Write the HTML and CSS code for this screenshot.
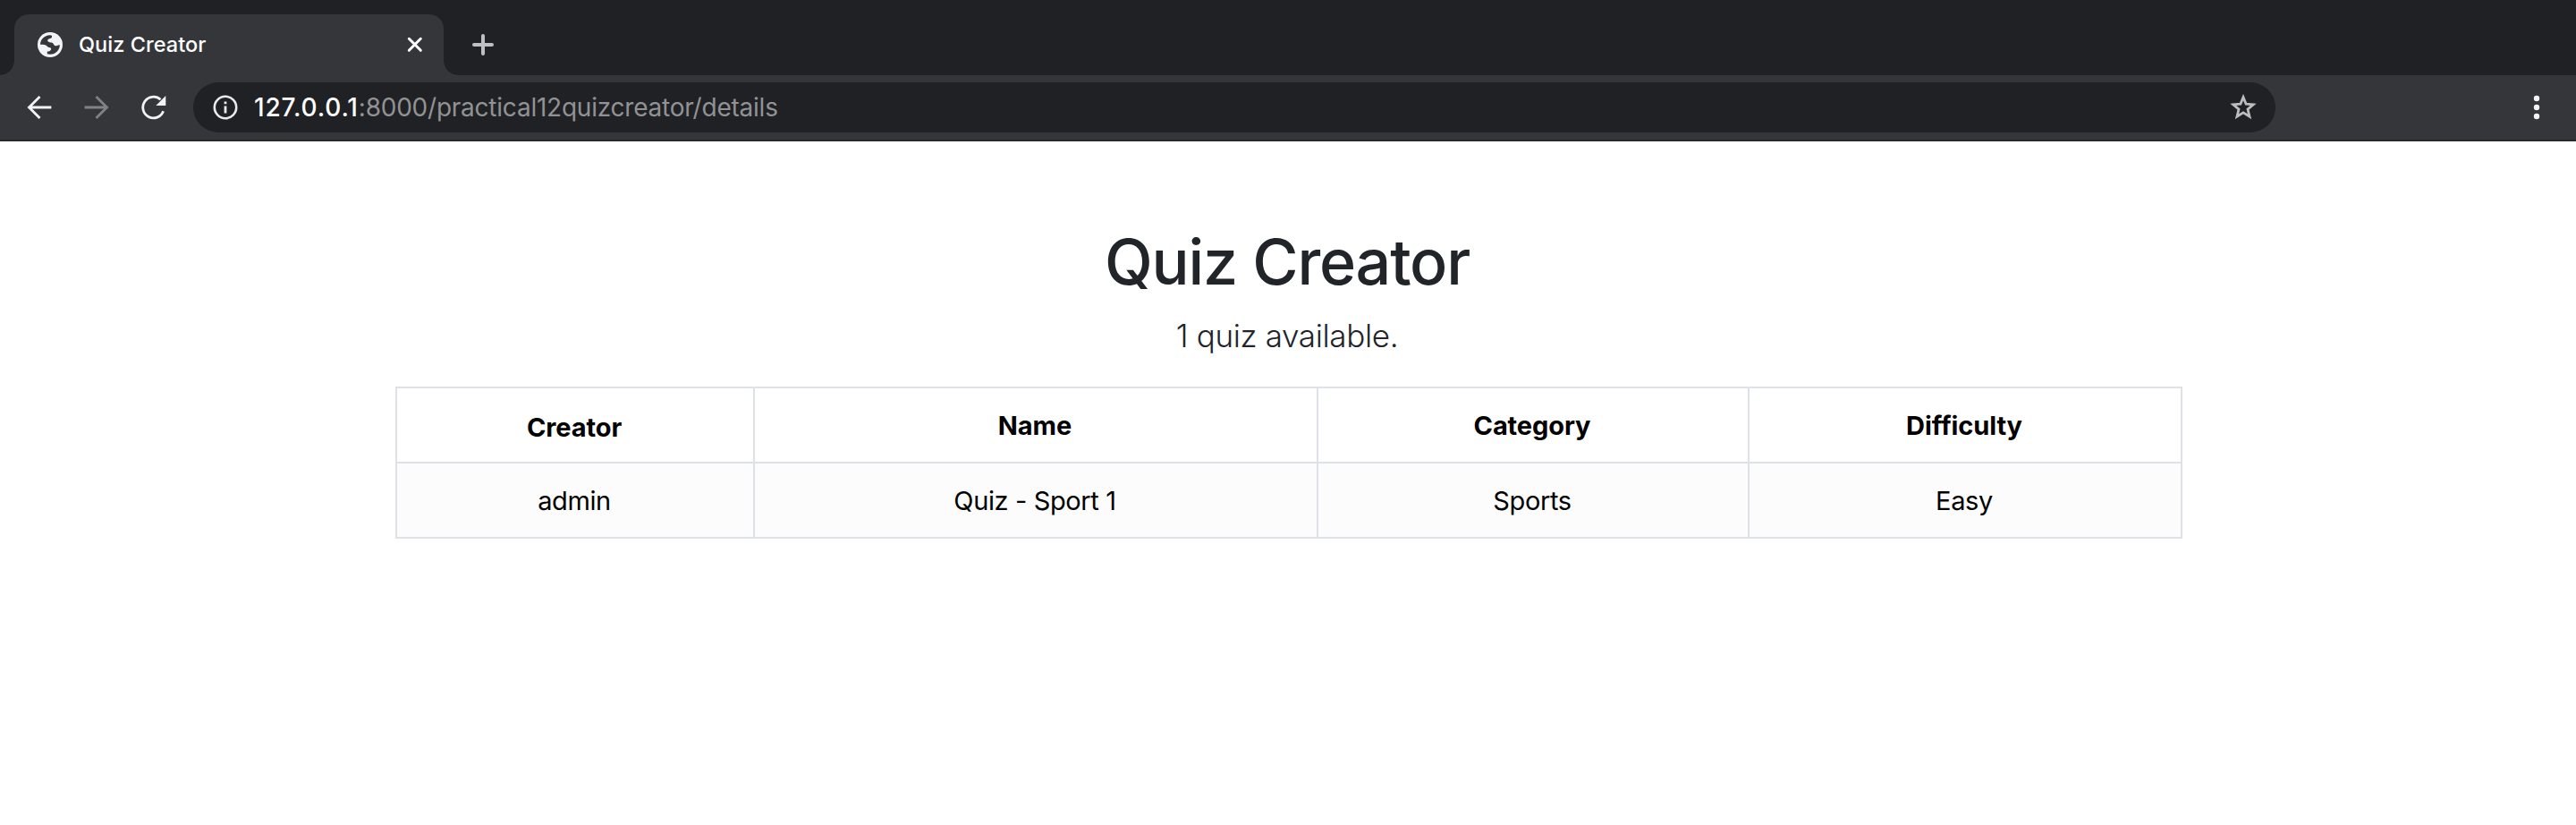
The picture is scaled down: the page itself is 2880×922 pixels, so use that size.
FILE: index.html
```
<!DOCTYPE html>
<html lang="en">
<head>
<meta charset="utf-8">
<title>Quiz Creator</title>
<link rel="stylesheet" href="styles.css">
</head>
<body>
<header class="browser">
  <div class="tabstrip">
    <div class="tab">
      <svg class="favicon" width="28" height="28" viewBox="42 36 28 28"><circle cx="56" cy="50" r="14" fill="#f1f3f4"/><path fill="#35363a" d="M45 49.7C45.2 44 49.5 39.4 56 39.2L58 39.8V41.8C57 43.6 53.3 42.9 53.3 45.5C53.3 47.5 57.8 47.2 58.8 48C60.4 49.4 60 51.3 63 51.3L66.8 50C67 55.5 62.5 60.8 56 60.8L52.8 60.2V57.6C55.5 57.6 57.2 56.6 57.2 54C55.8 52.6 53.8 53.3 52.5 51.5C51 49.4 48.5 49.8 45 49.7Z"/></svg>
      <span class="tab-title">Quiz Creator</span>
      <svg class="close" width="18" height="18" viewBox="0 0 18 18"><path d="M2.3 2.3 15.3 15.3M15.3 2.3 2.3 15.3" stroke="#fff" stroke-width="3" stroke-linecap="round"/></svg>
    </div>
    <svg class="new-tab" width="24" height="24" viewBox="0 0 24 24"><path d="M12 2V22M2 12H22" stroke="#bdc1c6" stroke-width="4" stroke-linecap="round"/></svg>
  </div>
  <div class="toolbar">
    <svg class="back" width="28" height="28" viewBox="0 0 28 28"><path d="M26 14H3M13.5 3 2.5 14 13.5 25" fill="none" stroke="#f1f3f4" stroke-width="2.8" stroke-linecap="square"/></svg>
    <svg class="forward" width="28" height="28" viewBox="0 0 28 28"><path d="M2 14H25M14.5 3 25.5 14 14.5 25" fill="none" stroke="#818285" stroke-width="2.8" stroke-linecap="square"/></svg>
    <svg class="reload" width="28" height="28" viewBox="0 0 28 28"><path d="M21.5 5.3A11.8 11.8 0 1 0 24.6 18.2" fill="none" stroke="#f1f3f4" stroke-width="2.8"/><path d="M27.3 1V12H16.3Z" fill="#f1f3f4"/></svg>
    <div class="omnibox">
      <svg class="info" width="28" height="28" viewBox="0 0 28 28"><circle cx="14" cy="14" r="12.2" fill="none" stroke="#e8eaed" stroke-width="2.6"/><path d="M12.6 7.5h2.8v2.8h-2.8zM12.6 12.6h2.8v7.9h-2.8z" fill="#e8eaed"/></svg>
      <span class="url"><b>127.0.0.1</b>:8000/practical12quizcreator/details</span>
      <svg class="star" width="30" height="30" viewBox="0 0 30 30"><path d="M15 3.6 18.1 11.2 26.2 11.8 20 17.1 22 25.2 15 20.9 8 25.2 10 17.1 3.8 11.8 11.9 11.2Z" fill="none" stroke="#bdbdbe" stroke-width="2.8"/></svg>
    </div>
    <svg class="menu" width="8" height="28" viewBox="0 0 8 28"><g fill="#f1f3f4"><circle cx="4" cy="4" r="3.2"/><circle cx="4" cy="14" r="3.2"/><circle cx="4" cy="24" r="3.2"/></g></svg>
  </div>
</header>
<main class="page">
  <h1 class="title">Quiz Creator</h1>
  <p class="lead">1 quiz available.</p>
  <table class="quizzes">
    <colgroup><col class="c1"><col class="c2"><col class="c3"><col class="c4"></colgroup>
    <thead><tr><th class="creator">Creator</th><th>Name</th><th>Category</th><th>Difficulty</th></tr></thead>
    <tbody><tr><td>admin</td><td>Quiz - Sport 1</td><td>Sports</td><td>Easy</td></tr></tbody>
  </table>
</main>
</body>
</html>
```
FILE: styles.css
```
* { box-sizing: border-box; }
body { margin: 0; background: #fff; font-family: Inter, "Liberation Sans", sans-serif; color: #212529; }
svg { display: block; flex: none; }
.browser { height: 158px; background: #35363a; border-bottom: 2px solid #28292c; }
.tabstrip { height: 84px; background: #202124; display: flex; padding-left: 16px; }
.tab { position: relative; width: 480px; height: 68px; margin-top: 16px; padding: 0 23px 0 26px; display: flex; align-items: center; background: #35363a; border-radius: 16px 16px 0 0; }
/* concave feet of the active tab */
.tab::before, .tab::after { content: ""; position: absolute; bottom: 0; width: 16px; height: 16px; }
.tab::before { left: -16px; background: radial-gradient(circle at 0 0, transparent 15.5px, #35363a 16px); }
.tab::after { right: -16px; background: radial-gradient(circle at 100% 0, transparent 15.5px, #35363a 16px); }
.tab-title { margin-left: 18px; font-size: 23.5px; font-weight: 500; line-height: 28px; letter-spacing: 0.05px; color: #fff; white-space: nowrap; }
.close { margin-left: auto; }
.new-tab { margin: 38px 0 0 32px; }
.toolbar { height: 72px; display: flex; align-items: center; padding: 0 40px 0 30px; }
.forward { margin-left: 36px; }
.reload { margin-left: 36px; }
.omnibox { width: 2328px; height: 56px; margin-left: 30px; padding: 0 21px 0 22px; border-radius: 28px; background: #202124; display: flex; align-items: center; }
.url { margin-left: 18px; font-size: 28px; line-height: 34px; letter-spacing: -0.23px; color: #919294; white-space: nowrap; }
.url b { font-weight: 500; letter-spacing: 0.85px; color: #fff; }
.star { margin-left: auto; }
.menu { margin-left: auto; }
.page { width: 1998px; margin: 0 auto 0 442px; padding-top: 92px; text-align: center; }
.title { margin: 0; padding-right: 4px; font-size: 70px; font-weight: 500; line-height: 86px; letter-spacing: -1.2px; }
.lead { margin: 18px 0 0; padding-right: 4px; font-size: 35px; font-weight: 300; line-height: 42px; letter-spacing: -0.35px; }
.quizzes { width: 1998px; margin-top: 36px; table-layout: fixed; border-collapse: collapse; color: #000; font-size: 29px; line-height: 36px; }
.c1 { width: 400px; }
.c2 { width: 630px; }
.c3 { width: 482px; }
.c4 { width: 484px; }
.quizzes th, .quizzes td { height: 84px; padding: 2px 2px 0 0; border: 2px solid #dee2e6; vertical-align: middle; }
.quizzes th { font-weight: 700; letter-spacing: -0.1px; }
.quizzes td { letter-spacing: -0.38px; }
.quizzes .creator { padding-top: 5px; }
.quizzes tbody { background: #fcfcfd; }
```
